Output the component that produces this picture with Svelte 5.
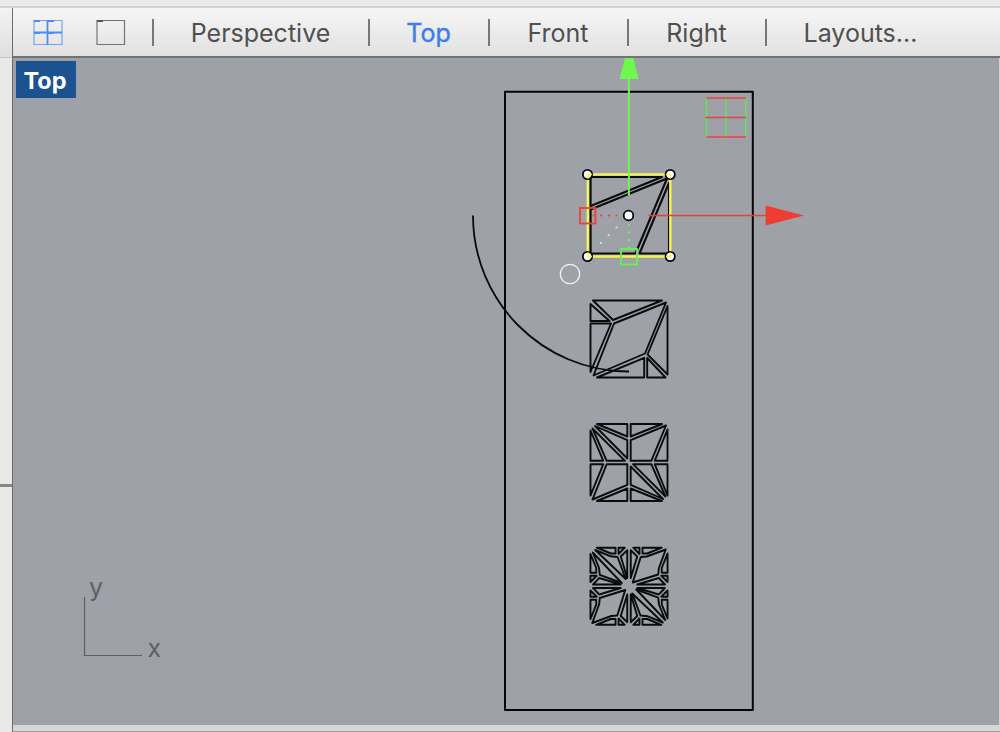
<script>
  const tabs = [
    { name: 'Perspective', width: 216 },
    { name: 'Top', width: 120, active: true },
    { name: 'Front', width: 139 },
    { name: 'Right', width: 138 },
    { name: 'Layouts...', width: 190 }
  ];

  const path = (polys) =>
    polys.map((p) => 'M' + p.map((q) => q.join(' ')).join('L') + 'Z').join('');
  const map = (polys, fn) => polys.map((p) => p.map(fn));

  const second = path([
    [[13, 10.5], [82, 10.5], [33, 30]],
    [[10.5, 14], [29.5, 31], [10.5, 31]],
    [[10.5, 33.5], [31, 33.5], [10.5, 82]],
    [[34, 33.5], [86, 12.5], [65, 63.5], [13.5, 85.5]],
    [[87.5, 16], [87.5, 84.5], [67.5, 64.5]],
    [[67.2, 68], [85.5, 87.5], [67.2, 87.5]],
    [[17, 87.5], [64.2, 67.8], [64.2, 87.5]]
  ]);

  const third = path([
    [[17, 10.5], [47.3, 10.5], [47.3, 23]],
    [[50.7, 10.5], [82, 10.5], [50.7, 23]],
    [[15, 12.5], [47.3, 26.7], [47.3, 45]],
    [[50.7, 26.7], [86, 12], [71.3, 47.3], [50.7, 47.3]],
    [[87.5, 16], [87.5, 47.3], [74.7, 47.3]],
    [[10.5, 17], [10.5, 47.3], [23.3, 47.3]],
    [[12.5, 15], [26.7, 47.3], [45, 47.3]],
    [[10.5, 50.7], [23.3, 50.7], [10.5, 82]],
    [[26.7, 50.7], [47.3, 50.7], [47.3, 71.3], [12.5, 86]],
    [[17, 87.5], [47.3, 75], [47.3, 87.5]],
    [[50.7, 87.5], [50.7, 75], [82, 87.5]],
    [[53, 50.7], [71.3, 50.7], [85.5, 83]],
    [[50.7, 53], [50.7, 71.3], [83, 85.5]],
    [[74.7, 50.7], [87.5, 50.7], [87.5, 82]]
  ]);

  const a = [
    [[17, 10.7], [35.8, 10.7], [35.8, 16.5], [31, 16.5]],
    [[38.8, 10.7], [45, 10.7], [38.8, 17]],
    [[47.5, 13.3], [41, 19.5], [47.5, 41]],
    [[15.5, 13], [31, 19.3], [37.8, 20], [46, 42]]
  ];
  const b = [
    [[51, 13.3], [57.5, 19.5], [51, 41]],
    [[53.5, 10.7], [59.7, 10.7], [59.7, 17]],
    [[62.7, 10.7], [82, 10.7], [67.5, 16.5], [62.7, 16.5]]
  ];
  const half = [
    ...a,
    ...map(a, ([x, y]) => [y, x]),
    ...b,
    ...map(b, ([x, y]) => [98.5 - y, 98.5 - x]),
    [[86, 12.5], [67, 19.5], [61, 20], [53, 45.500], [78.500, 37.5], [79, 31.500]]
  ];
  const fourth = path([...half, ...map(half, ([x, y]) => [98.5 - x, 98.5 - y])]);
</script>

<div class="window">
  <div class="strip"></div>
  <div class="main">
    <aside><div class="head"></div><div class="upper"></div><div class="lower"></div></aside>
    <section>
      <nav>
        <div class="icons">
          <svg class="four" width="30" height="27" viewBox="0 0 30 27" fill="none" stroke="#4c8cf8">
            <path d="M1 1.5H29V25.5H1Z" stroke-width="1.2" opacity=".75" />
            <path d="M14.5 1V26M1 13.5H29" stroke-width="1.8" />
            <path d="M1 2H7M15 2H21M1 14H7M15 14H21" stroke-width="2" />
          </svg>
          <svg width="30" height="27" viewBox="0 0 30 27" fill="none" stroke="#747474">
            <path d="M1 1.5H28.5V25.5H1Z" stroke-width="1.2" />
            <path d="M1 2H7" stroke="#555" stroke-width="2" />
          </svg>
        </div>
        {#each tabs as tab}
          <div class="tab" class:active={tab.active} style="width: {tab.width}px"><span>{tab.name}</span></div>
        {/each}
      </nav>
      <div class="viewport">
        <svg class="scene" width="987" height="666" viewBox="13 58 987 666" fill="none">
          <rect x="505" y="91.8" width="247.8" height="618.2" stroke="#050505" stroke-width="2" stroke-linejoin="round" />
          <g stroke="#0b0b0b" stroke-width="1.9" stroke-linejoin="round">
            <path d="M590.6 177H662L590.6 206ZM590.6 209.5L667 178.500L635.5 253.5H590.6ZM669 183V253.5H639.500Z" stroke-width="2.1" />
            <path transform="translate(580 290)" d={second} />
            <path transform="translate(580 413.5)" d={third} />
            <path transform="translate(579.75 537)" d={fourth} />
            <path d="M473 215.5C473 301.5 542.5 371.5 629 371.5" stroke-width="1.8" />
          </g>
          <g stroke-width="1.4">
            <path d="M706.5 97.5V137.5M726.2 97.5V137.5M745.7 97.5V137.5" stroke="#5bea55" />
            <path d="M706.5 98H746M705 117.5H746M706.5 137H746" stroke="#e54545" />
          </g>
          <rect x="587.8" y="174.5" width="82.5" height="82" stroke="#f8f550" stroke-width="2.4" />
          <g fill="#fff" stroke="#080808" stroke-width="1.8">
            <circle cx="587.5" cy="174.5" r="4.6" />
            <circle cx="670.2" cy="174.5" r="4.6" />
            <circle cx="587.5" cy="256.5" r="4.6" />
            <circle cx="670.2" cy="256.5" r="4.6" />
            <circle cx="628.5" cy="215.5" r="4.8" />
          </g>
          <path d="M588 178.5V174.5H592M666 174.5H670.2V178.5M588 252.5V256.5H592M666 256.5H670.2V252.5" stroke="#f8f550" stroke-width="1.6" />
          <circle cx="570" cy="274" r="9.7" stroke="#f5f5f5" stroke-width="1.3" />
          <g stroke-linecap="round" stroke-width="2.2">
            <path d="M593.5 215.5H620" stroke="#f04035" stroke-dasharray="0 7.7" />
            <path d="M628.7 225V250" stroke="#6aff45" stroke-dasharray="0 7.5" />
            <path d="M616.5 227.5L593 250.5" stroke="#dcdee2" stroke-dasharray="0 11" />
          </g>
          <path d="M628.9 195.5V78" stroke="#6cf84c" stroke-width="2" />
          <path d="M619.5 79L625 58H633.5L638.5 79Z" fill="#6cf84c" />
          <path d="M648.5 215.5H767" stroke="#ee3e33" stroke-width="1.7" />
          <path d="M765.7 205.5L804 215.5L765.7 225.5Z" fill="#ee3e33" />
          <rect x="580" y="208" width="15.5" height="15.5" stroke="#f04035" stroke-width="1.8" />
          <rect x="621" y="249" width="16" height="15.5" stroke="#62f54a" stroke-width="1.8" />
          <path d="M84.5 597V655.5H142" stroke="#5d6166" stroke-width="1.2" />
          <g class="axis"><text x="89" y="595.5">y</text><text x="147.5" y="656.5">x</text></g>
        </svg>
        <div class="label">Top</div>
      </div>
      <footer></footer>
    </section>
  </div>
</div>

<style>
  :global(body) { margin: 0; overflow: hidden; }
  .window { width: 1000px; height: 732px; display: flex; flex-direction: column; background: #ececec; font-family: Inter, 'Liberation Sans', sans-serif; }
  .strip { height: 8px; flex: none; box-sizing: border-box; background: #ebebeb; border-bottom: 2px solid #d2d2d2; }
  .main { flex: 1; display: flex; min-height: 0; }
  aside { width: 13px; flex: none; box-sizing: border-box; border-right: 1.5px solid #6b6b6b; background: #e9e9e9; display: flex; flex-direction: column; }
  .head { height: 49px; background: linear-gradient(#f3f3f3, #dfdfdf); border-bottom: 1px solid #c8c8c8; }
  .upper { height: 426px; border-bottom: 3px solid #858585; }
  .lower { flex: 1; }
  section { flex: 1; min-width: 0; display: flex; flex-direction: column; }
  nav { height: 50px; box-sizing: border-box; flex: none; display: flex; align-items: center; background: linear-gradient(#f6f6f6, #e1e1e1); border-bottom: 2px solid #70756f; }
  .icons { width: 139px; flex: none; box-sizing: border-box; padding-left: 20px; display: flex; gap: 33px; }
  .icons svg { display: block; }
  .tab { height: 27px; flex: none; box-sizing: border-box; border-left: 2px solid #777; padding: 1px 1px 0 0; display: flex; align-items: center; justify-content: center; color: #505050; font-size: 25px; white-space: nowrap; }
  .tab.active { color: #3b7dec; -webkit-text-stroke: 0.4px #3b7dec; }
  .viewport { height: 667px; flex: none; box-sizing: border-box; background: #9ea1a8; border-right: 1px solid #d0d1d4; position: relative; overflow: hidden; }
  .scene { display: block; }
  .label { position: absolute; left: 3px; top: 3px; width: 60px; height: 37px; box-sizing: border-box; padding: 1px 2px 0 0; background: #1c528f; color: white; font-weight: 700; font-size: 23.5px; line-height: 37px; text-align: center; }
  .axis text { fill: #5d6166; font-family: Inter, sans-serif; font-size: 25px; }
  footer { flex: 1; background: #d5d7d4; border-bottom: 1px solid #9b9d9e; }
</style>
